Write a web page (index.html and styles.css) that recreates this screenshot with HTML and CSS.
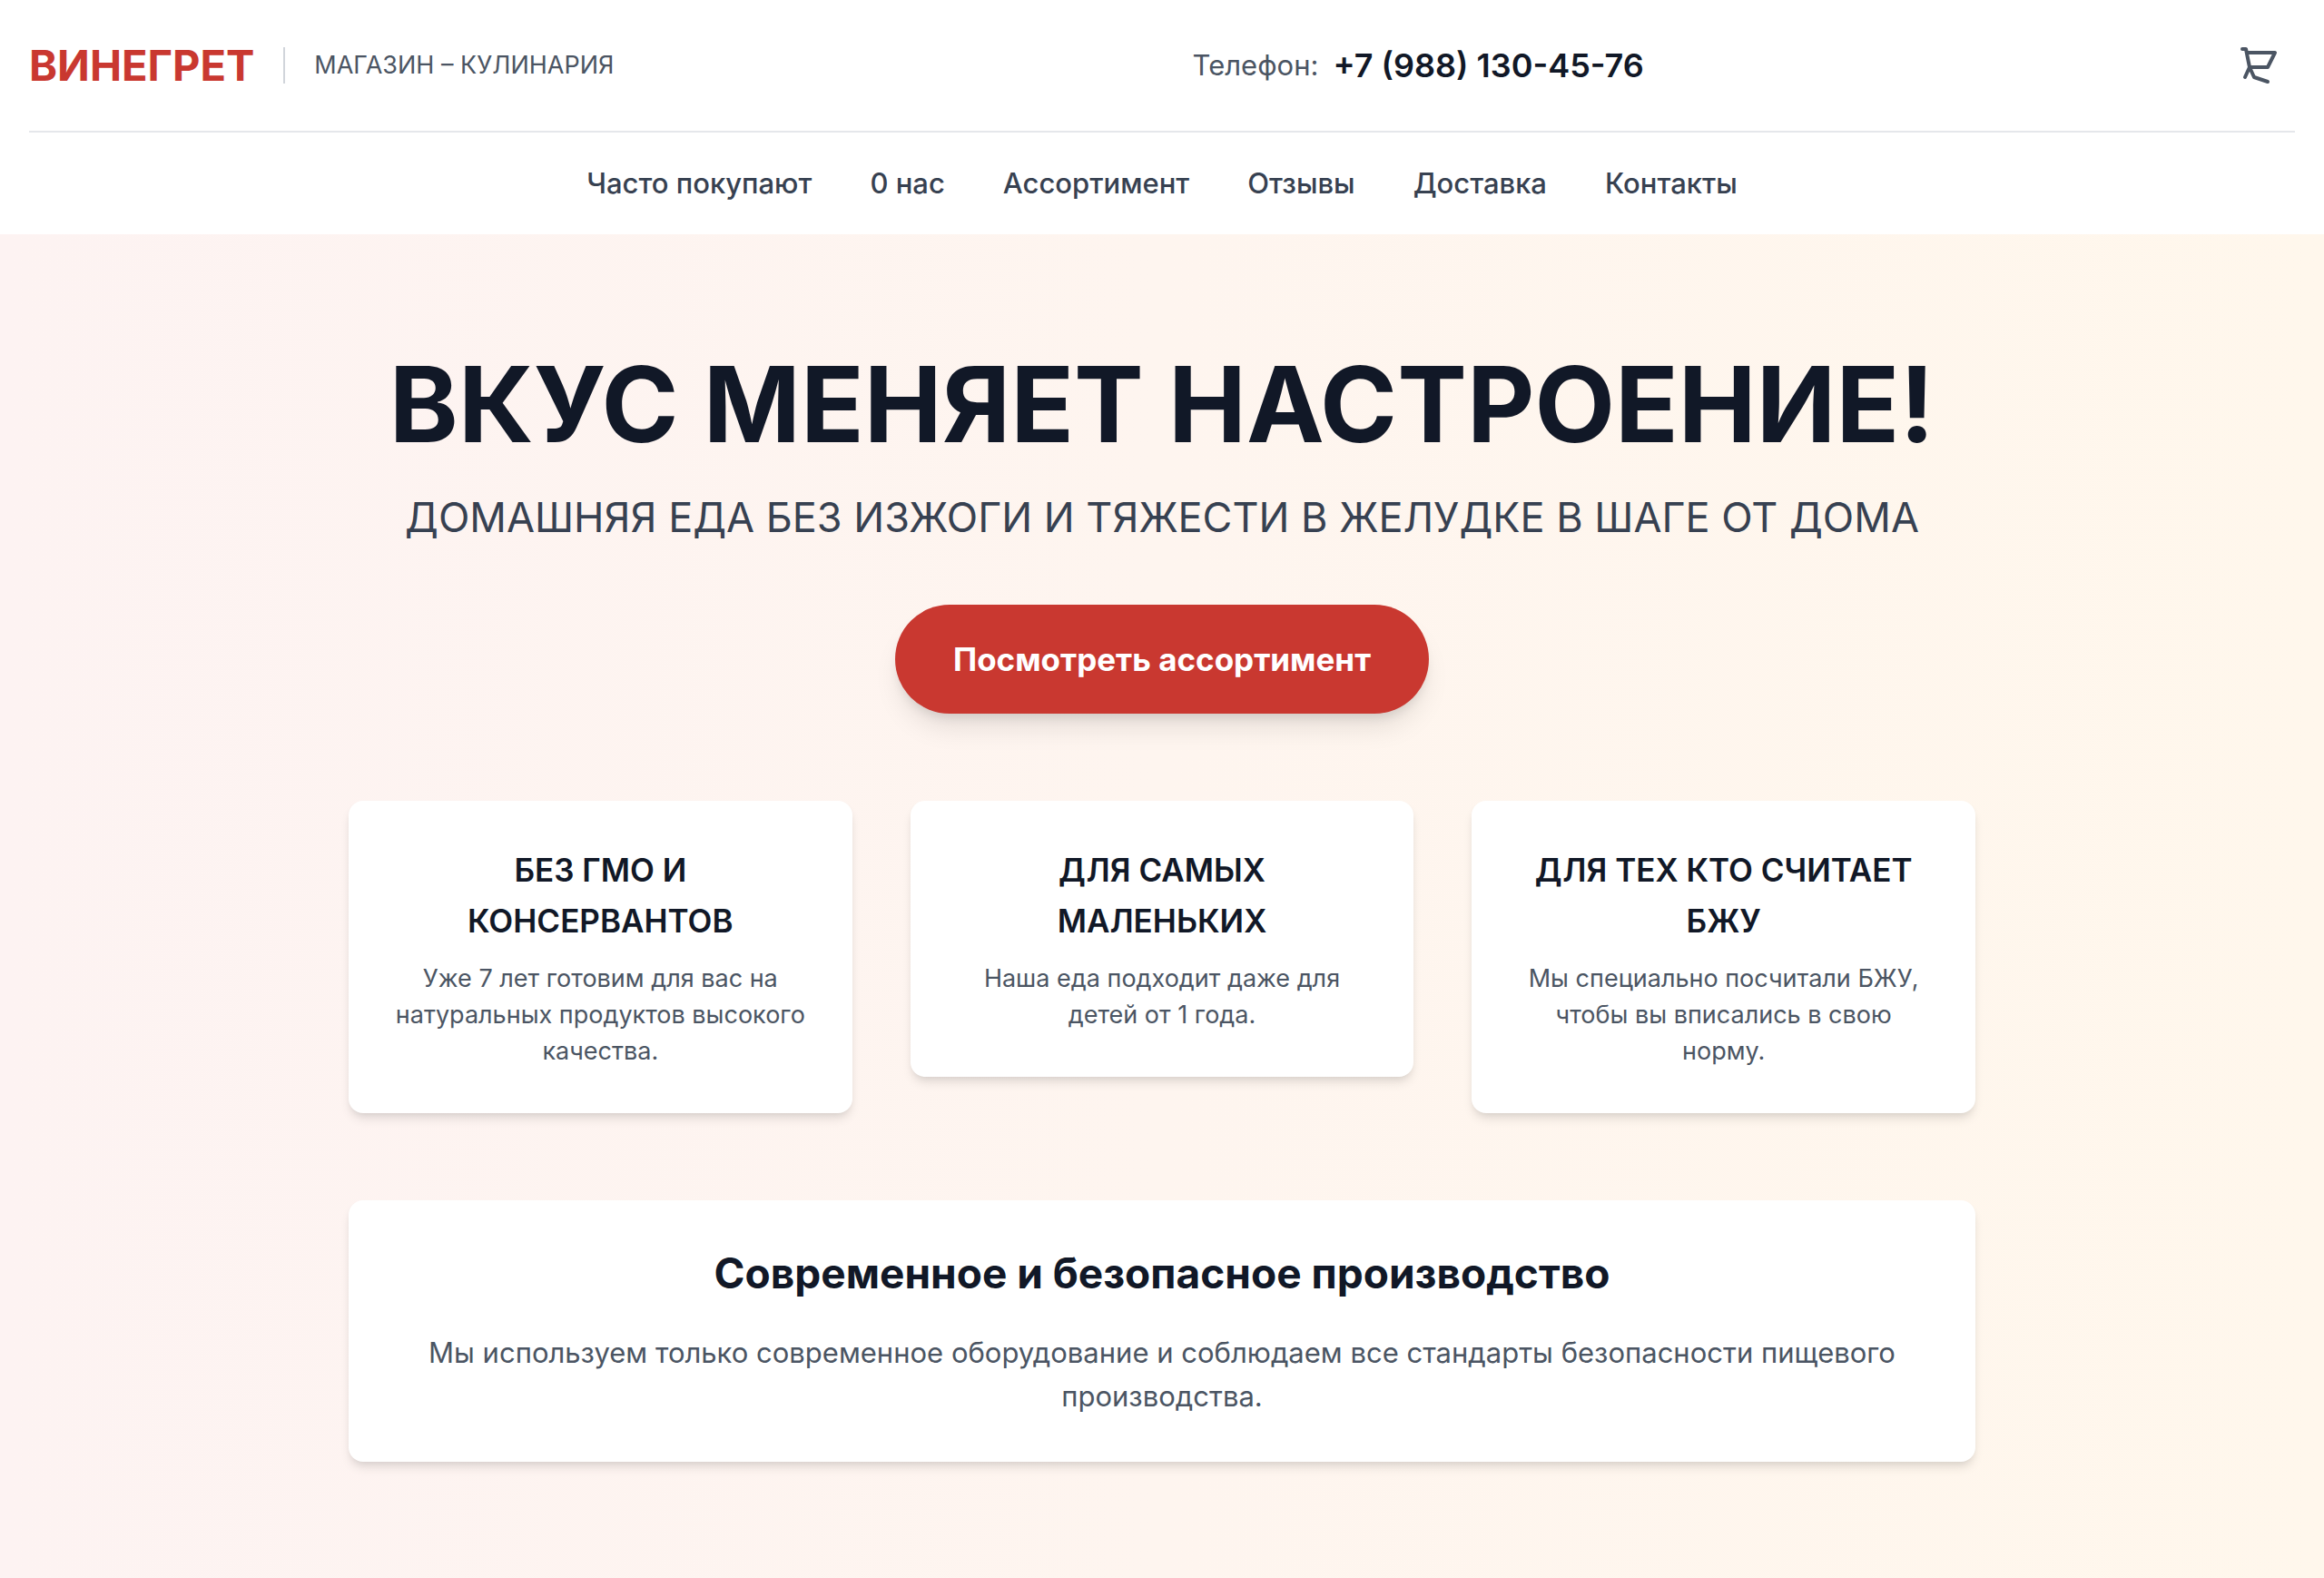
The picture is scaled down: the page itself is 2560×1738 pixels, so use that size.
FILE: index.html
```html
<!DOCTYPE html>
<html lang="ru">
<head>
<meta charset="utf-8">
<meta name="viewport" content="width=device-width, initial-scale=1">
<title>ВИНЕГРЕТ — магазин-кулинария</title>
<link rel="stylesheet" href="styles.css">
</head>
<body>
<header class="header">
  <div class="header-top">
    <div class="brand">
      <a class="logo" href="#">ВИНЕГРЕТ</a>
      <span class="brand-divider"></span>
      <span class="tagline">МАГАЗИН – КУЛИНАРИЯ</span>
    </div>
    <div class="phone">
      <span class="phone-label">Телефон:</span>
      <a class="phone-number" href="tel:+79881304576">+7 (988) 130-45-76</a>
    </div>
    <button class="cart" type="button" aria-label="Корзина">
      <svg class="cart-icon" viewBox="0 0 24 24" fill="none" stroke="currentColor" stroke-width="2" stroke-linecap="round" stroke-linejoin="round" aria-hidden="true">
        <path d="M3 3h2l.4 2M7 13h10l4-8H5.4M7 13L5.4 5M7 13l-2.500 5.500M7 13l2.500 5.500L17 21"/>
      </svg>
    </button>
  </div>
  <nav class="nav">
    <a href="#popular">Часто покупают</a>
    <a href="#about">0 нас</a>
    <a href="#assortment">Ассортимент</a>
    <a href="#reviews">Отзывы</a>
    <a href="#delivery">Доставка</a>
    <a href="#contacts">Контакты</a>
  </nav>
</header>
<main class="hero">
  <div class="hero-inner">
    <h1 class="hero-title">ВКУС МЕНЯЕТ НАСТРОЕНИЕ!</h1>
    <p class="hero-subtitle">ДОМАШНЯЯ ЕДА БЕЗ ИЗЖОГИ И ТЯЖЕСТИ В ЖЕЛУДКЕ В ШАГЕ ОТ ДОМА</p>
    <button class="cta" type="button">Посмотреть ассортимент</button>
    <div class="features">
      <article class="card">
        <h2 class="card-title">БЕЗ ГМО И КОНСЕРВАНТОВ</h2>
        <p class="card-text">Уже 7 лет готовим для вас на натуральных продуктов высокого качества.</p>
      </article>
      <article class="card">
        <h2 class="card-title">ДЛЯ САМЫХ МАЛЕНЬКИХ</h2>
        <p class="card-text">Наша еда подходит даже для детей от 1 года.</p>
      </article>
      <article class="card">
        <h2 class="card-title">ДЛЯ ТЕХ КТО СЧИТАЕТ БЖУ</h2>
        <p class="card-text">Мы специально посчитали БЖУ, чтобы вы вписались в свою норму.</p>
      </article>
    </div>
    <section class="card production">
      <h2 class="production-title">Современное и безопасное производство</h2>
      <p class="production-text">Мы используем только современное оборудование и соблюдаем все стандарты безопасности пищевого производства.</p>
    </section>
  </div>
</main>
</body>
</html>
```
FILE: styles.css
```css
* { box-sizing: border-box; margin: 0; padding: 0; }

body {
  display: flex;
  flex-direction: column;
  min-height: 100vh;
  font-family: Inter, "Liberation Sans", sans-serif;
  font-size: 31px;
  line-height: 48px;
  color: #111827;
  background: #fff;
}

a { color: inherit; text-decoration: none; }
button { font: inherit; border: 0; cursor: pointer; }

.header { padding: 0 32px; background: #fff; }

.header-top {
  display: flex;
  align-items: center;
  justify-content: space-between;
  padding: 32px 0;
  border-bottom: 2px solid #e5e7eb;
}

.brand { display: flex; align-items: center; gap: 32px; }
.logo { font-size: 47px; font-weight: 700; color: #c93830; }
.brand-divider { width: 2px; height: 40px; background: #d1d5db; }
.tagline { font-size: 27px; line-height: 40px; color: #4b5563; }

.phone { display: flex; align-items: center; gap: 16px; }
.phone-label { color: #4b5563; }
.phone-number { font-size: 36px; font-weight: 600; }

.cart { padding: 16px; background: none; color: #4b5563; }
.cart-icon { display: block; width: 48px; height: 48px; }

.nav {
  display: flex;
  justify-content: center;
  gap: 64px;
  padding: 32px 0;
  font-weight: 500;
  color: #374151;
}

.hero {
  flex: 1;
  padding: 128px 32px;
  text-align: center;
  background: linear-gradient(to right, #fdf3f2, #fff7ec);
}

.hero-inner { max-width: 1792px; margin: 0 auto; }

.hero-title {
  margin-bottom: 32px;
  font-size: 115px;
  line-height: 120px;
  font-weight: 700;
  white-space: nowrap;
}

.hero-subtitle {
  margin-bottom: 64px;
  font-size: 45px;
  line-height: 64px;
  color: #374151;
  white-space: nowrap;
}

.cta {
  display: block;
  margin: 0 auto 96px;
  padding: 32px 64px;
  border-radius: 60px;
  font-size: 35px;
  line-height: 56px;
  font-weight: 700;
  color: #fff;
  background: #c93830;
  box-shadow: 0 20px 30px -6px rgba(0, 0, 0, 0.1), 0 8px 12px -4px rgba(0, 0, 0, 0.1);
}

.features {
  display: grid;
  grid-template-columns: repeat(3, 1fr);
  align-items: start;
  gap: 64px;
  margin-bottom: 96px;
}

.card {
  padding: 48px;
  border-radius: 16px;
  background: #fff;
  box-shadow: 0 8px 12px -2px rgba(0, 0, 0, 0.1), 0 4px 8px -4px rgba(0, 0, 0, 0.1);
}

.card-title {
  margin-bottom: 16px;
  font-size: 35px;
  line-height: 56px;
  font-weight: 600;
}

.card-text { font-size: 27px; line-height: 40px; color: #4b5563; }

.production-title {
  margin-bottom: 32px;
  font-size: 46px;
  line-height: 64px;
  font-weight: 700;
}

.production-text { color: #4b5563; }
```
